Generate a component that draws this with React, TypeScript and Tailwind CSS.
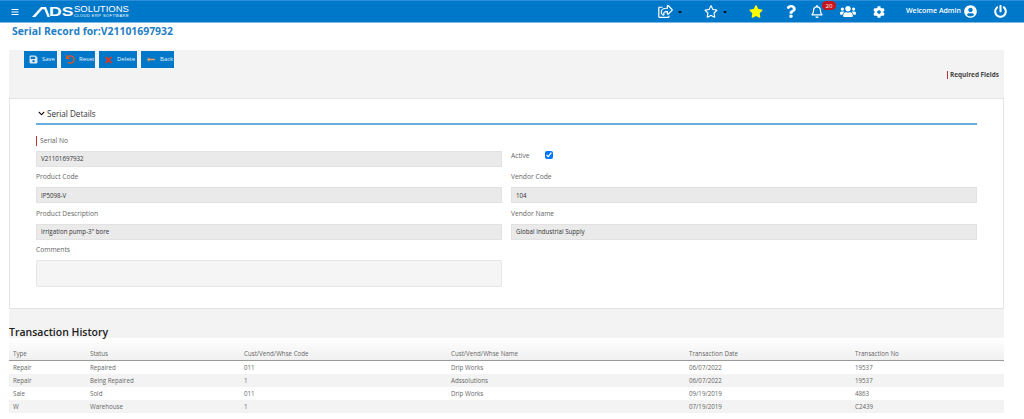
import { FaBars, FaCog, FaPowerOff, FaQuestion, FaRegBell, FaRegShareSquare, FaRegStar, FaSave, FaStar, FaTimes, FaUndo, FaUserCircle, FaUsers, FaLongArrowAltLeft, FaCaretDown, FaChevronDown } from "react-icons/fa";

const rows = [
  ["Repair", "Repaired", "011", "Drip Works", "06/07/2022", "19537"],
  ["Repair", "Being Repaired", "1", "Adssolutions", "06/07/2022", "19537"],
  ["Sale", "Sold", "011", "Drip Works", "09/19/2019", "4863"],
  ["W", "Warehouse", "1", "", "07/19/2019", "C2439"]
];
const columns = ["Type", "Status", "Cust/Vend/Whse Code", "Cust/Vend/Whse Name", "Transaction Date", "Transaction No"];
const gridCols = "grid grid-cols-[77px_154px_207px_238px_166px_1fr]";

function Logo() {
  return (
    <div className="ml-[13px] flex h-[16px] items-center text-white [font-family:'Liberation_Sans',sans-serif]">
      <svg width="20" height="10" viewBox="0 0 20 10" fill="none" aria-hidden="true">
        <path d="M0 10 L9 0 H14 L18 10 H15.5 L12.4 2.2 H10.2 L3.4 10 Z" fill="#fff" />
      </svg>
      <span className="ml-[-3px] inline-block w-[24px] origin-left scale-x-[1.3] text-[13.5px] leading-none font-bold">DS</span>
      <div className="ml-[1px] flex flex-col">
        <span className="text-[9.5px] leading-[8px]">SOLUTIONS</span>
        <span className="text-[4px] leading-[5px] tracking-[0.45px]">CLOUD ERP SOFTWARE</span>
      </div>
    </div>
  );
}

function Header() {
  return (
    <header className="flex h-[23px] items-center border-t border-b border-t-[#2a8fd6] border-b-[#7cb9e6] bg-[#0078c9] text-white">
      <FaBars className="ml-[11px] h-[8px] w-[8px]" />
      <Logo />
      <div className="ml-auto flex items-center">
        <FaRegShareSquare className="h-[13px] w-[15px]" />
        <FaCaretDown className="ml-[4px] h-[6px] w-[6px] text-black" />
        <FaRegStar className="ml-[21px] h-[13px] w-[14px]" />
        <FaCaretDown className="ml-[4px] h-[6px] w-[6px] text-black" />
        <FaStar className="ml-[21px] h-[13px] w-[14px] text-[#ffff00]" />
        <FaQuestion className="ml-[23px] h-[13px] w-[10px]" />
        <div className="relative ml-[15px]">
          <FaRegBell className="h-[13px] w-[12px]" />
          <span className="absolute top-[-4px] left-[11px] flex h-[9px] w-[14px] items-center justify-center rounded-full bg-[#c8141c] text-[6px] leading-none">20</span>
        </div>
        <FaUsers className="ml-[17px] h-[13px] w-[16px]" />
        <FaCog className="ml-[17px] h-[12px] w-[12px]" />
        <span className="ml-[21px] w-[56px] text-[7px] font-semibold whitespace-nowrap [font-family:'Open_Sans',sans-serif]">Welcome Admin</span>
        <FaUserCircle className="ml-[2px] h-[13px] w-[13px]" />
        <FaPowerOff className="mr-[17px] ml-[17px] h-[13px] w-[13px]" />
      </div>
    </header>
  );
}

function ToolButton({ label, icon, width }: { label: string; icon: React.ReactNode; width: string }) {
  return (
    <button className={`flex h-[17px] items-center gap-[4px] bg-[#0078c9] pl-[5px] text-[6px] text-[#e6f2fb] ${width}`}>
      {icon}
      {label}
    </button>
  );
}

function Field({ label, value, required }: { label: string; value: string; required?: boolean }) {
  return (
    <div className="h-[36.4px]">
      <div className={`h-[10px] text-[6.7px] leading-[10px] text-[#666] ${required ? "border-l border-[#b5323c] pl-[3px]" : ""}`}>{label}</div>
      <div className="mt-[5px] flex h-[16px] items-center border border-[#e2e2e2] bg-[#eaeaea] px-[4px] text-[6.2px] text-[#333]">{value}</div>
    </div>
  );
}

export default function App() {
  return (
    <div className="h-[419px] w-[1024px] overflow-hidden bg-white [font-family:'Open_Sans',sans-serif]">
      <Header />
      <h1 className="mt-[1px] ml-[12px] text-[10.4px] leading-[14px] font-bold text-[#1f7fc4]">Serial Record for:V21101697932</h1>
      <main className="mt-[12px] ml-[9px] h-[288px] w-[995px] bg-[#f3f3f3]">
        <div className="flex h-[48px] gap-[4px] pt-[1px] pl-[15px]">
          <ToolButton label="Save" width="w-[33px]" icon={<FaSave className="h-[9px] w-[9px] shrink-0 text-[#dfe8f0]" />} />
          <ToolButton label="Reset" width="w-[34px]" icon={<FaUndo className="h-[9px] w-[9px] shrink-0 text-[#e0561c]" />} />
          <ToolButton label="Delete" width="w-[38px]" icon={<FaTimes className="h-[10px] w-[9px] shrink-0 text-[#e2341d]" />} />
          <ToolButton label="Back" width="w-[33px]" icon={<FaLongArrowAltLeft className="h-[9px] w-[10px] shrink-0 text-[#f0a060]" />} />
          <div className="mt-[20px] mr-[5px] ml-auto h-[8px] border-l border-[#b5323c] pl-[2px] text-[6.4px] leading-[8px] font-bold text-[#444]">Required Fields</div>
        </div>
        <section className="h-[211px] border border-[#e4e4e4] bg-white px-[26px]">
          <div className="flex h-[24px] items-end gap-[2px] pb-[4px] text-[8.1px] leading-[11px] text-[#333]">
            <FaChevronDown className="mb-[2px] ml-[2px] h-[7px] w-[7px] text-black" />
            Serial Details
          </div>
          <div className="h-[2px] bg-[#6aaee0]" />
          <div className="mt-[11px] grid grid-cols-[466px_466px] gap-x-[9px]">
            <div>
              <Field label="Serial No" value="V21101697932" required />
              <Field label="Product Code" value="IP5098-V" />
              <Field label="Product Description" value="Irrigation pump-3&quot; bore" />
              <div className="text-[6.7px] leading-[10px] text-[#666]">Comments</div>
              <div className="mt-[5px] h-[27px] rounded-[2px] border border-[#e4e6ea] bg-[#f5f5f5]" />
            </div>
            <div>
              <div className="flex h-[36.4px] items-start pt-[15px] text-[6.7px] leading-[10px] text-[#666]">
                <span className="w-[34px]">Active</span>
                <input type="checkbox" defaultChecked className="h-[8px] w-[8px] accent-[#0075ff]" />
              </div>
              <Field label="Vendor Code" value="104" />
              <Field label="Vendor Name" value="Global Industrial Supply" />
            </div>
          </div>
        </section>
        <h2 className="mt-[15px] text-[10.5px] leading-[16px] font-semibold text-[#222]">Transaction History</h2>
      </main>
      <div className="ml-[9px] w-[995px] text-[6.2px] text-[#666]">
        <div className={`${gridCols} h-[23px] items-end border-b border-[#999] bg-gradient-to-b from-white to-[#f0f0f0] pb-[2px] pl-[4px]`}>
          {columns.map((column) => (
            <div key={column}>{column}</div>
          ))}
        </div>
        {rows.map((row, index) => (
          <div key={index} className={`${gridCols} h-[13px] items-center pl-[4px] ${index % 2 ? "bg-[#f3f3f3]" : "bg-white"}`}>
            {row.map((cell, cellIndex) => (
              <div key={cellIndex}>{cell}</div>
            ))}
          </div>
        ))}
      </div>
    </div>
  );
}
